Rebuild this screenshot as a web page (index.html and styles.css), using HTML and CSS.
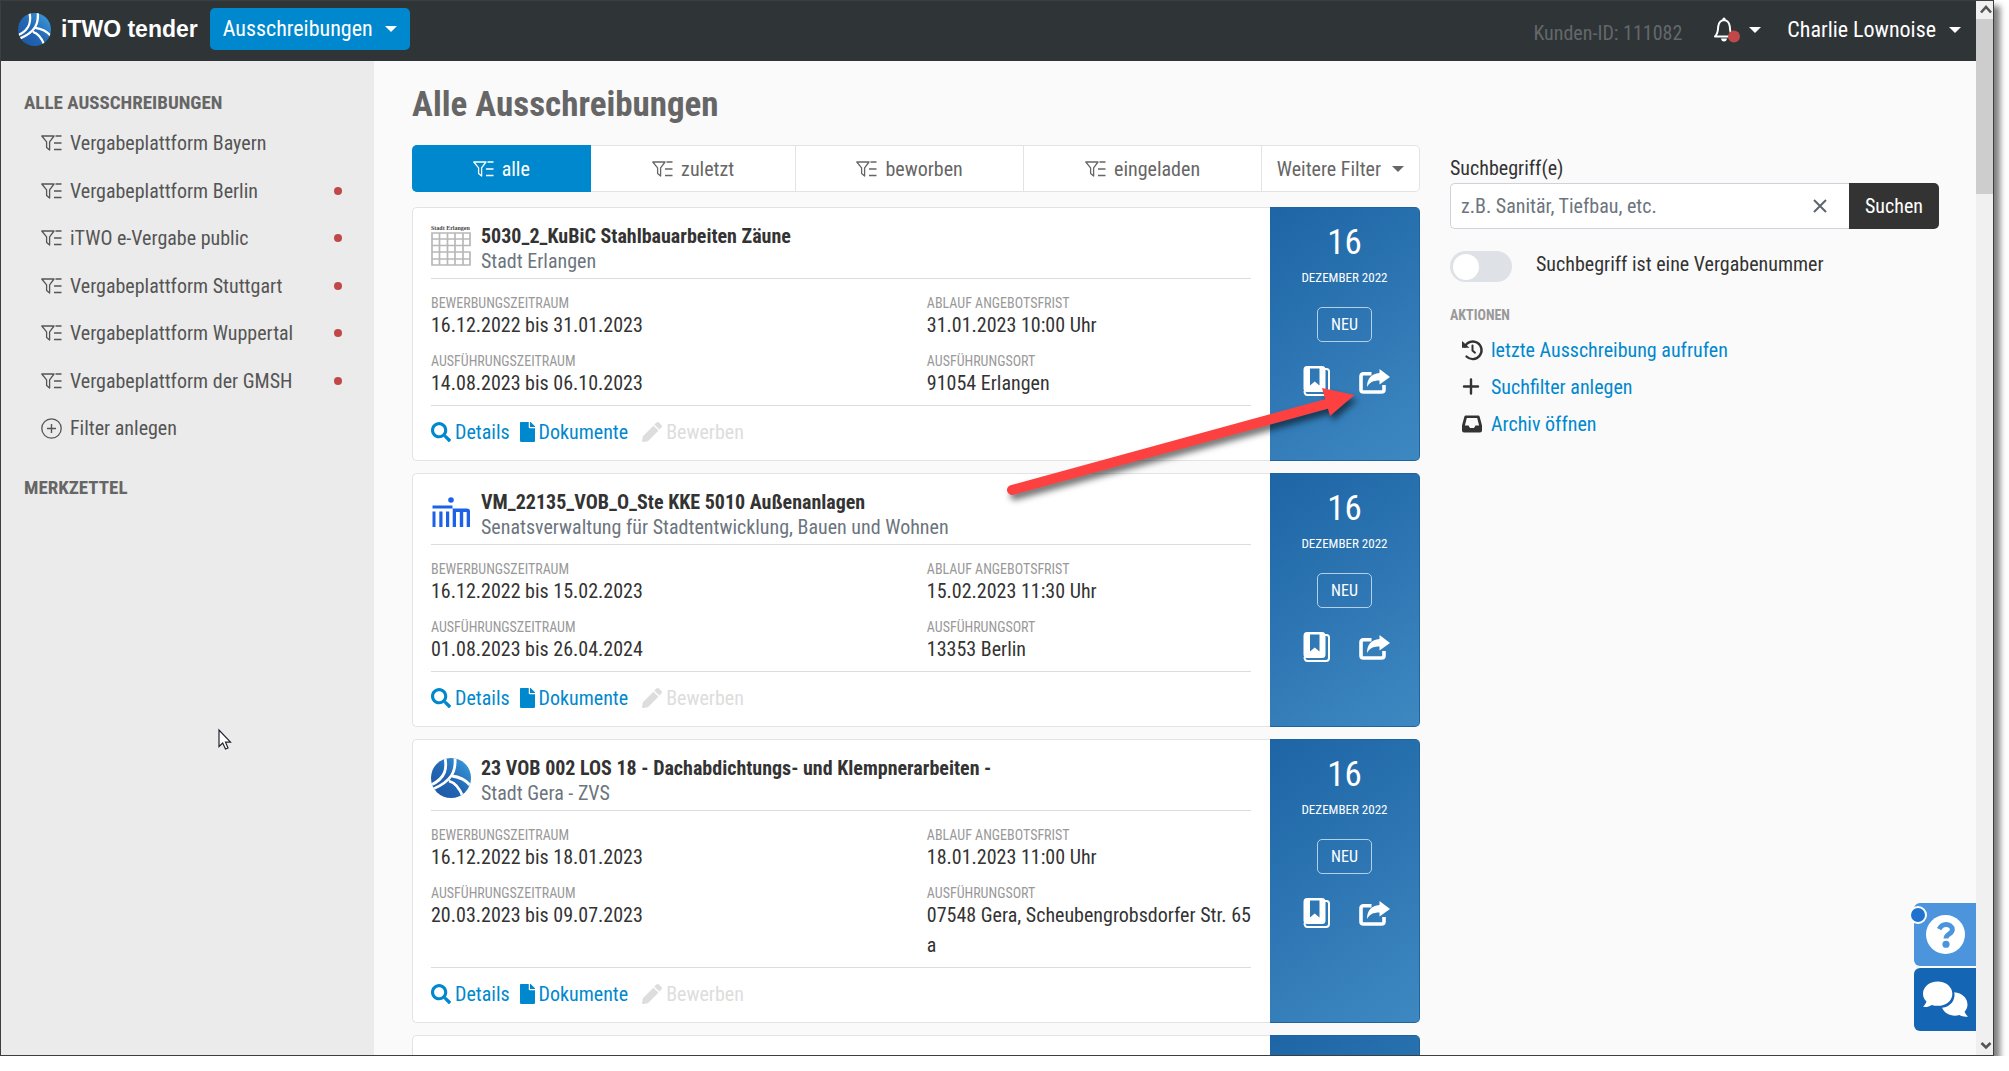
FILE: index.html
```html
<!DOCTYPE html>
<html lang="de">
<head>
<meta charset="utf-8">
<title>iTWO tender – Alle Ausschreibungen</title>
<link rel="stylesheet" href="styles.css">
</head>
<body>
<svg class="defs" aria-hidden="true">
  <defs>
    <linearGradient id="globe" x1="0" y1="1" x2="1" y2="0">
      <stop offset="0" stop-color="#1c55a5"/><stop offset=".5" stop-color="#2368b4"/><stop offset="1" stop-color="#3fa4e2"/>
    </linearGradient>
    <clipPath id="disc"><circle cx="20" cy="20" r="20"/></clipPath>
  </defs>
  <symbol id="i-logo" viewBox="0 0 40 40">
    <g clip-path="url(#disc)">
      <rect width="40" height="40" fill="url(#globe)"/>
      <g fill="none" stroke="#fff" stroke-width="2.8">
        <path d="M14 0C16 10 15 20 0 27"/><path d="M24 0C25 13 21 23 2 31"/>
        <path d="M21 18C29 19 35 22 40 28"/><path d="M18 23C25 25 29 31 32 39"/>
      </g>
    </g>
  </symbol>
  <symbol id="i-filter" viewBox="0 0 21 16">
    <path d="M.8 1H13L8.600 6.800V15L5.600 12.500V6.800ZM14.500 1H20.500M13 8H20.500M13 14.500H20.500" fill="none" stroke="currentColor" stroke-width="1.3" stroke-linejoin="round"/>
  </symbol>
  <symbol id="i-search" viewBox="0 0 512 512"><path fill="currentColor" d="M505 442.7L405.3 343c-4.500-4.500-10.600-7-17-7H372c27.600-35.300 44-79.700 44-128C416 93.100 322.900 0 208 0S0 93.100 0 208s93.100 208 208 208c48.300 0 92.700-16.400 128-44v16.300c0 6.400 2.500 12.500 7 17l99.700 99.700c9.400 9.400 24.600 9.400 33.900 0l28.300-28.300c9.400-9.400 9.400-24.600.1-34zM208 336c-70.700 0-128-57.200-128-128 0-70.700 57.200-128 128-128 70.700 0 128 57.200 128 128 0 70.700-57.200 128-128 128z"/></symbol>
  <symbol id="i-file" viewBox="0 0 384 512"><path fill="currentColor" d="M224 136V0H24C10.700 0 0 10.700 0 24v464c0 13.300 10.700 24 24 24h336c13.300 0 24-10.700 24-24V160H248c-13.200 0-24-10.800-24-24zm160-14.100v6.100H256V0h6.100c6.400 0 12.500 2.500 17 7l97.900 98c4.500 4.500 7 10.600 7 16.900z"/></symbol>
  <symbol id="i-pencil" viewBox="0 0 512 512"><path fill="currentColor" d="M497.9 142.1l-46.100 46.100c-4.700 4.700-12.300 4.700-17 0l-111-111c-4.700-4.700-4.700-12.300 0-17l46.100-46.100c18.700-18.700 49.100-18.700 67.900 0l60.100 60.100c18.800 18.700 18.800 49.100 0 67.900zM284.200 99.800L21.600 362.400.4 483.900c-2.900 16.400 11.400 30.600 27.800 27.800l121.500-21.300 262.600-262.600c4.700-4.700 4.700-12.300 0-17l-111-111c-4.800-4.700-12.400-4.700-17.100 0z"/></symbol>
  <symbol id="i-book" viewBox="0 0 27 30">
    <path fill="none" stroke="currentColor" stroke-width="2" d="M22 3H23.500Q26 3 26 5.500V26Q26 29 23 29H4.500Q1.500 29 1.500 25"/>
    <path fill="currentColor" fill-rule="evenodd" d="M4 0H19Q22.500 0 22.500 3.500V22.500Q22.500 26 19 26H4Q.5 26 .5 22.500V4Q.5 0 4 0ZM7 2.500V19.500L11.700 15.500L16.500 19.500V2.500Z"/>
  </symbol>
  <symbol id="i-share" viewBox="0 0 31 25">
    <path fill="none" stroke="currentColor" stroke-width="3.600" stroke-linejoin="round" d="M12.500 4.800H4.500Q2 4.800 2 7.300V20.700Q2 23 4.500 23H22.500Q25 23 25 20.700V16"/>
    <path fill="currentColor" d="M20.500 0L31 8L20.500 15.500V11.500C14 11.500 10.500 13.500 8 18C8 9.500 12.500 4.500 20.500 4Z"/>
  </symbol>
</svg>

<div class="window">
  <div class="app">
    <header class="topbar">
      <a class="brand" href="#"><svg class="brand-logo"><use href="#i-logo"/></svg>iTWO tender</a>
      <button class="menu-btn" type="button">Ausschreibungen<span class="caret"></span></button>
      <span class="customer">Kunden-ID: 111082</span>
      <button class="bell" type="button" aria-label="Benachrichtigungen">
        <svg class="bell-icon" viewBox="0 0 28 26"><path d="M2 19.500C5 17 5 14 5.200 9.500Q6 3.500 11 3Q16 3.500 16.800 9.500C17 14 17 17 20 19.500Z" fill="none" stroke="#fff" stroke-width="2" stroke-linejoin="round"/><path d="M9.500 1.500Q11-.5 12.500 1.500V4H9.500ZM8 21.500H14Q13.500 24.500 11 24.500Q8.500 24.500 8 21.500Z" fill="#fff"/><circle cx="21" cy="19.500" r="6" fill="#c04848"/></svg>
        <span class="caret"></span>
      </button>
      <button class="user" type="button">Charlie Lownoise<span class="caret"></span></button>
    </header>

    <div class="columns">
      <nav class="sidebar">
        <h2>ALLE AUSSCHREIBUNGEN</h2>
        <ul>
          <li><a href="#"><svg class="filter-icon"><use href="#i-filter"/></svg>Vergabeplattform Bayern</a></li>
          <li><a href="#"><svg class="filter-icon"><use href="#i-filter"/></svg>Vergabeplattform Berlin<i class="dot"></i></a></li>
          <li><a href="#"><svg class="filter-icon"><use href="#i-filter"/></svg>iTWO e-Vergabe public<i class="dot"></i></a></li>
          <li><a href="#"><svg class="filter-icon"><use href="#i-filter"/></svg>Vergabeplattform Stuttgart<i class="dot"></i></a></li>
          <li><a href="#"><svg class="filter-icon"><use href="#i-filter"/></svg>Vergabeplattform Wuppertal<i class="dot"></i></a></li>
          <li><a href="#"><svg class="filter-icon"><use href="#i-filter"/></svg>Vergabeplattform der GMSH<i class="dot"></i></a></li>
          <li><a href="#"><svg class="add-icon" viewBox="0 0 21 21"><path d="M10.500 6V15M6 10.500H15" stroke="currentColor" stroke-width="1.400"/><circle cx="10.500" cy="10.500" r="9.700" fill="none" stroke="currentColor" stroke-width="1.300"/></svg>Filter anlegen</a></li>
        </ul>
        <h2>MERKZETTEL</h2>
      </nav>

      <main class="content">
        <section class="results">
          <h1>Alle Ausschreibungen</h1>
          <div class="tabs">
            <button class="tab active" type="button"><svg class="filter-icon"><use href="#i-filter"/></svg>alle</button>
            <button class="tab" type="button"><svg class="filter-icon"><use href="#i-filter"/></svg>zuletzt</button>
            <button class="tab" type="button"><svg class="filter-icon"><use href="#i-filter"/></svg>beworben</button>
            <button class="tab" type="button"><svg class="filter-icon"><use href="#i-filter"/></svg>eingeladen</button>
            <button class="tab more" type="button">Weitere Filter<span class="caret"></span></button>
          </div>

          <article class="card">
            <div class="card-body">
              <div class="card-head">
                <svg class="client" viewBox="0 0 40 40">
                  <text x="0" y="4" font-family="Liberation Serif, serif" font-weight="bold" font-size="6" fill="#444">Stadt Erlangen</text>
                  <path d="M1 7H39V19.500H32V26H39V39H1ZM1 13H39M1 19.500H32M1 26H32M1 33H39M8.500 7V39M16.500 7V39M24 7V39M32 7V39" fill="none" stroke="#b8b8b8" stroke-width="1.700"/>
                </svg>
                <div><h3>5030_2_KuBiC Stahlbauarbeiten Zäune</h3><p>Stadt Erlangen</p></div>
              </div>
              <dl class="facts">
                <div><dt>BEWERBUNGSZEITRAUM</dt><dd>16.12.2022 bis 31.01.2023</dd></div>
                <div><dt>ABLAUF ANGEBOTSFRIST</dt><dd>31.01.2023 10:00 Uhr</dd></div>
                <div><dt>AUSFÜHRUNGSZEITRAUM</dt><dd>14.08.2023 bis 06.10.2023</dd></div>
                <div><dt>AUSFÜHRUNGSORT</dt><dd>91054 Erlangen</dd></div>
              </dl>
              <div class="actions">
                <a href="#"><svg class="i20"><use href="#i-search"/></svg>Details</a>
                <a href="#"><svg class="i15"><use href="#i-file"/></svg>Dokumente</a>
                <button type="button" disabled><svg class="i20"><use href="#i-pencil"/></svg>Bewerben</button>
              </div>
            </div>
            <div class="date-panel">
              <span class="day">16</span><span class="month">DEZEMBER 2022</span><span class="badge">NEU</span>
              <div class="panel-icons">
                <button type="button" aria-label="Merken"><svg class="book"><use href="#i-book"/></svg></button>
                <button type="button" aria-label="Teilen"><svg class="share"><use href="#i-share"/></svg></button>
              </div>
            </div>
          </article>

          <article class="card">
            <div class="card-body">
              <div class="card-head">
                <svg class="client" viewBox="0 0 40 40" fill="#1b62e8"><circle cx="20" cy="8" r="2.800"/><path d="M1.500 13.500H21.500V16.500H1.500ZM1.500 19.500H4.500V35H1.500ZM8.300 19.500H11.500V35H8.300ZM15 19.500H18.200V35H15ZM21.700 16.500H36Q39 16.500 39 19.500V35H35.700V20H32.200V35H28.800V20H25V35H21.700Z"/></svg>
                <div><h3>VM_22135_VOB_O_Ste KKE 5010 Außenanlagen</h3><p>Senatsverwaltung für Stadtentwicklung, Bauen und Wohnen</p></div>
              </div>
              <dl class="facts">
                <div><dt>BEWERBUNGSZEITRAUM</dt><dd>16.12.2022 bis 15.02.2023</dd></div>
                <div><dt>ABLAUF ANGEBOTSFRIST</dt><dd>15.02.2023 11:30 Uhr</dd></div>
                <div><dt>AUSFÜHRUNGSZEITRAUM</dt><dd>01.08.2023 bis 26.04.2024</dd></div>
                <div><dt>AUSFÜHRUNGSORT</dt><dd>13353 Berlin</dd></div>
              </dl>
              <div class="actions">
                <a href="#"><svg class="i20"><use href="#i-search"/></svg>Details</a>
                <a href="#"><svg class="i15"><use href="#i-file"/></svg>Dokumente</a>
                <button type="button" disabled><svg class="i20"><use href="#i-pencil"/></svg>Bewerben</button>
              </div>
            </div>
            <div class="date-panel">
              <span class="day">16</span><span class="month">DEZEMBER 2022</span><span class="badge">NEU</span>
              <div class="panel-icons">
                <button type="button" aria-label="Merken"><svg class="book"><use href="#i-book"/></svg></button>
                <button type="button" aria-label="Teilen"><svg class="share"><use href="#i-share"/></svg></button>
              </div>
            </div>
          </article>

          <article class="card">
            <div class="card-body">
              <div class="card-head">
                <svg class="client"><use href="#i-logo"/></svg>
                <div><h3>23 VOB 002 LOS 18 - Dachabdichtungs- und Klempnerarbeiten -</h3><p>Stadt Gera - ZVS</p></div>
              </div>
              <dl class="facts">
                <div><dt>BEWERBUNGSZEITRAUM</dt><dd>16.12.2022 bis 18.01.2023</dd></div>
                <div><dt>ABLAUF ANGEBOTSFRIST</dt><dd>18.01.2023 11:00 Uhr</dd></div>
                <div><dt>AUSFÜHRUNGSZEITRAUM</dt><dd>20.03.2023 bis 09.07.2023</dd></div>
                <div><dt>AUSFÜHRUNGSORT</dt><dd>07548 Gera, Scheubengrobsdorfer Str. 65 a</dd></div>
              </dl>
              <div class="actions">
                <a href="#"><svg class="i20"><use href="#i-search"/></svg>Details</a>
                <a href="#"><svg class="i15"><use href="#i-file"/></svg>Dokumente</a>
                <button type="button" disabled><svg class="i20"><use href="#i-pencil"/></svg>Bewerben</button>
              </div>
            </div>
            <div class="date-panel">
              <span class="day">16</span><span class="month">DEZEMBER 2022</span><span class="badge">NEU</span>
              <div class="panel-icons">
                <button type="button" aria-label="Merken"><svg class="book"><use href="#i-book"/></svg></button>
                <button type="button" aria-label="Teilen"><svg class="share"><use href="#i-share"/></svg></button>
              </div>
            </div>
          </article>

          <article class="card next">
            <div class="card-body"></div>
            <div class="date-panel"></div>
          </article>
        </section>

        <aside class="search">
          <label for="term">Suchbegriff(e)</label>
          <div class="search-row">
            <div class="field">
              <input id="term" type="text" placeholder="z.B. Sanitär, Tiefbau, etc.">
              <button class="clear" type="button" aria-label="Eingabe löschen"><svg viewBox="0 0 14 14"><path d="M1 1L13 13M13 1L1 13" stroke="#5d666e" stroke-width="2"/></svg></button>
            </div>
            <button class="go" type="button">Suchen</button>
          </div>
          <div class="switch-row">
            <input id="isnumber" type="checkbox" role="switch">
            <label for="isnumber">Suchbegriff ist eine Vergabenummer</label>
          </div>
          <h2>AKTIONEN</h2>
          <ul>
            <li><a href="#"><svg viewBox="0 0 20 20"><path d="M2.800 6.500A8.800 8.800 0 1 1 4.500 16.500" fill="none" stroke="#333" stroke-width="2.400" stroke-linecap="round"/><path d="M0 1L7.500 7.800H0ZM0 7.800L0 1.200L2.500 3Z" fill="#333"/><path d="M10.500 5.500V10.500L13 12.700" fill="none" stroke="#333" stroke-width="2" stroke-linecap="round"/></svg>letzte Ausschreibung aufrufen</a></li>
            <li><a href="#"><svg viewBox="0 0 20 20"><path d="M9 2.500V16.500M2 9.500H16" stroke="#333" stroke-width="2.400" stroke-linecap="round"/></svg>Suchfilter anlegen</a></li>
            <li><a href="#"><svg viewBox="0 0 20 20"><path d="M3.800 1.500H16.200Q17.200 1.500 17.600 2.500L20 11.500V16.500Q20 18.500 18 18.500H2Q0 18.500 0 16.500V11.500L2.400 2.500Q2.800 1.500 3.800 1.500ZM4.800 4L2.900 11.500H6.500L8 14H12L13.500 11.500H17.100L15.200 4Z" fill="#333" fill-rule="evenodd"/></svg>Archiv öffnen</a></li>
          </ul>
        </aside>
      </main>
    </div>

    <div class="floating">
      <button class="help" type="button" aria-label="Hilfe">
        <svg viewBox="0 0 40 40"><circle cx="20" cy="20" r="20" fill="#fff"/><path d="M13.500 14.500C15.500 10.500 18 9.700 20.500 9.700C24 9.700 27 12 27 15C27 19.500 20.500 19.500 20.500 24" fill="none" stroke="#4c95dc" stroke-width="5"/><circle cx="20.500" cy="30" r="3.700" fill="#4c95dc"/></svg>
        <span class="notice"></span>
      </button>
      <button class="chat" type="button" aria-label="Chat">
        <svg viewBox="0 0 46 37" fill="#fff"><path d="M32 11C40 11.500 45.500 17 45.500 23.500C45.500 26.500 44.300 29 42.500 31C43.300 33.200 45 35 46 36C42.500 36.600 39.500 35.700 37.300 34.400C30 36.500 22 33.500 19.500 27C28 26 33.500 19 32 11Z"/><path d="M15 0C23.500 0 30 5.700 30 12.500C30 19.500 23.500 25 15 25C13 25 11 24.600 9 24C6.500 25.600 3.500 26.500 0 26C1.500 24.500 3 22.500 3.500 20.500C1.300 18.300 0 15.500 0 12.500C0 5.700 6.500 0 15 0Z"/></svg>
      </button>
    </div>

    <svg class="pointer" viewBox="0 0 14 22"><path d="M1 1V17.500L4.700 14L7.500 20L10 19L7.500 13.200H12.500Z" fill="#fff" stroke="#23232e" stroke-width="1.200"/></svg>
    <svg class="arrow" viewBox="0 0 360 120"><path d="M12 100L330 13" stroke="#fd4141" stroke-width="10" stroke-linecap="round"/><path d="M322 -2L354.500 5L330 26Z" fill="#fd4141"/></svg>
  </div>

  <div class="scrollbar" aria-hidden="true">
    <svg viewBox="0 0 17 18"><path d="M5 11.500L10 6L15 11.500" fill="none" stroke="#555" stroke-width="2.600"/></svg>
    <div class="thumb"></div>
    <svg viewBox="0 0 17 18"><path d="M5.500 6L10 10.500L14.500 6" fill="none" stroke="#555" stroke-width="2.600"/></svg>
  </div>
</div>
</body>
</html>
```
FILE: styles.css
```css
* { box-sizing: border-box; }
body, h1, h2, h3, p, ul, dl, dd { margin: 0; padding: 0; }
ul { list-style: none; }
body { background: #fff; color: #333; font: 20px/30px "Roboto Condensed", Roboto, sans-serif; overflow: hidden; }
button, input { font: inherit; color: inherit; margin: 0; padding: 0; border: 0; background: none; }
a { color: #0088ce; text-decoration: none; }
svg { display: block; flex: none; overflow: visible; }
.defs { position: absolute; width: 0; height: 0; }

/* window frame */
.window { display: flex; height: calc(100vh - 15px); margin-right: 15px; border: 1px solid #3c3f41; box-shadow: 6px 6px 6px rgba(0, 0, 0, .5); overflow: hidden; }
.app { position: relative; display: flex; flex-direction: column; flex: 1; min-width: 0; background: #fafafa; overflow: hidden; }
.scrollbar { display: flex; flex-direction: column; width: 17px; background: #f0f0f0; }
.scrollbar svg { width: 17px; height: 18px; }
.scrollbar .thumb { height: 175px; margin-bottom: auto; background: #cdcdcd; }
.caret { border: 6px solid transparent; border-top-color: currentColor; border-bottom: 0; }

/* top bar */
.topbar { display: flex; align-items: center; flex: none; height: 60px; padding: 0 15px 4px 17px; background: #2f3437; color: #fff; }
.topbar button { display: flex; align-items: center; }
.brand { display: flex; align-items: center; gap: 10px; color: #fff; font: bold 23px/30px "Liberation Sans", Arial, sans-serif; }
.brand-logo { width: 33px; height: 33px; }
.topbar .menu-btn { gap: 12px; height: 42px; margin-left: 12px; padding: 0 13px; border-radius: 5px; background: #0088ce; font-size: 22px; }
.customer { margin: 8px 31px 0 auto; color: #63686a; }
.bell, .user { margin-top: 2px; }
.bell { gap: 8px; }
.bell-icon { width: 28px; height: 26px; }
.user { gap: 13px; margin-left: 26px; font-size: 22px; }

/* sidebar */
.columns { display: flex; flex: 1; min-height: 0; }
.sidebar { flex: none; width: 373px; padding: 27px 32px 0 23px; background: #ebebeb; color: #555; }
.sidebar h2 { color: #666; font-size: 19px; line-height: 30px; }
.sidebar ul { display: flex; flex-direction: column; justify-content: space-between; min-height: 315px; margin: 10px 0 30px; padding-left: 17px; }
.sidebar a { display: flex; align-items: center; gap: 8px; color: inherit; }
.filter-icon { width: 21px; height: 16px; }
.add-icon { width: 21px; height: 21px; }
.dot { width: 8px; height: 8px; margin-left: auto; border-radius: 50%; background: #c04848; }

/* result list */
.content { display: grid; grid-template-columns: minmax(0, 1fr) 489px; column-gap: 30px; flex: 1; min-width: 0; align-items: start; padding: 0 37px 0 38px; }
.results { padding-top: 23px; }
h1 { color: #666; font-size: 35px; line-height: 42px; }
.tabs { display: flex; height: 47px; margin: 19px 0 15px; }
.tab { display: flex; align-items: center; justify-content: center; gap: 8px; flex: 1 1 auto; border: 1px solid #e3e3e3; border-left: 0; background: #fff; color: #666; }
.tab.active { border-color: #0088ce; border-radius: 5px 0 0 5px; background: #0088ce; color: #fff; }
.tab.more { flex: none; gap: 11px; padding: 0 15px; border-radius: 0 5px 5px 0; }

.card { display: flex; margin-bottom: 12px; }
.card-body { flex: 1; min-width: 0; padding: 18px 19px 13px 18px; border: 1px solid #e3e3e3; border-right: 0; border-radius: 5px 0 0 5px; background: #fff; }
.card-head { display: flex; gap: 10px; padding-bottom: 7px; border-bottom: 1px solid #dcdcdc; }
.client { width: 40px; height: 40px; }
.card h3, .card p { font-size: 20px; line-height: 20px; }
.card p { margin-top: 5px; color: #6c757d; }
.facts { display: grid; grid-template-columns: minmax(0, 7fr) minmax(0, 5fr); row-gap: 14px; margin-right: -30px; padding: 17px 0 7px; }
.facts dt { color: #999; font-size: 14px; line-height: 14px; }
.facts dd { padding-right: 28px; }
.actions { display: flex; gap: 10px; padding-top: 11px; border-top: 1px solid #dcdcdc; }
.actions a, .actions button { display: flex; align-items: center; gap: 4px; }
.actions button { margin-left: 4px; color: #ddd; }
.i20 { width: 20px; height: 20px; }
.i15 { width: 15px; height: 20px; }

.date-panel { display: flex; flex-direction: column; align-items: center; flex: none; width: 150px; padding-top: 14px; border: 1px solid #1f639f; border-left: 0; border-radius: 0 5px 5px 0; background: linear-gradient(145deg, #1d65a5, #3e88c2); color: #fff; }
.day { font-size: 35px; line-height: 42px; }
.month { margin-top: 4px; font-size: 13px; line-height: 20px; }
.badge { margin-top: 19px; padding: 0 13px; border: 1px solid #b4d0e8; border-radius: 5px; font-size: 16px; line-height: 33px; }
.panel-icons { display: flex; gap: 29px; margin-top: 25px; padding-left: 4px; }
.panel-icons button { display: flex; align-items: center; height: 28px; }
.book { width: 27px; height: 30px; }
.share { width: 31px; height: 25px; }
.next { min-height: 254px; }

/* search column */
.search { padding-top: 92px; }
.search > label { display: block; }
.search-row { display: flex; height: 46px; }
.field { display: flex; align-items: center; flex: 1; min-width: 0; padding: 0 22px 0 10px; border: 1px solid #ccd3da; border-right: 0; border-radius: 5px 0 0 5px; background: #fff; }
.field input { flex: 1; min-width: 0; height: 44px; outline: 0; }
.field input::placeholder { color: #6c757d; opacity: 1; }
.clear svg { width: 14px; height: 14px; }
.go { padding: 0 16px; border-radius: 0 5px 5px 0; background: #333; color: #fff; }
.switch-row { display: flex; gap: 24px; margin-top: 20px; }
.switch-row input { display: flex; align-items: center; appearance: none; width: 62px; height: 31px; margin-top: 2px; padding-left: 3px; border-radius: 16px; background: #dee2e6; }
.switch-row input::before { content: ""; width: 26px; height: 26px; border-radius: 50%; background: #fff; }
.search h2 { margin: 23px 0 10px; color: #999; font-size: 14px; line-height: 20px; }
.search ul { display: flex; flex-direction: column; gap: 7px; padding-left: 12px; }
.search li a { display: flex; align-items: center; gap: 9px; }
.search li svg { width: 20px; height: 20px; }

/* overlays */
.floating { position: absolute; right: 0; bottom: 24px; display: flex; flex-direction: column; gap: 2px; width: 62px; }
.floating button { position: relative; display: flex; align-items: center; justify-content: center; height: 63px; border-radius: 6px 0 0 6px; }
.help { background: #4c95dc; }
.help svg { width: 39px; height: 39px; }
.chat { background: #1465b4; }
.chat svg { width: 45px; height: 37px; }
.notice { position: absolute; left: -5px; top: 3px; width: 18px; height: 18px; border: 2px solid #fff; border-radius: 50%; background: #1f72cd; }
.pointer { position: absolute; left: 217px; top: 728px; width: 14px; height: 22px; }
.arrow { position: absolute; left: 999px; top: 389px; width: 360px; height: 120px; pointer-events: none; filter: drop-shadow(3px 5px 3px rgba(0, 0, 0, .55)); }
```
